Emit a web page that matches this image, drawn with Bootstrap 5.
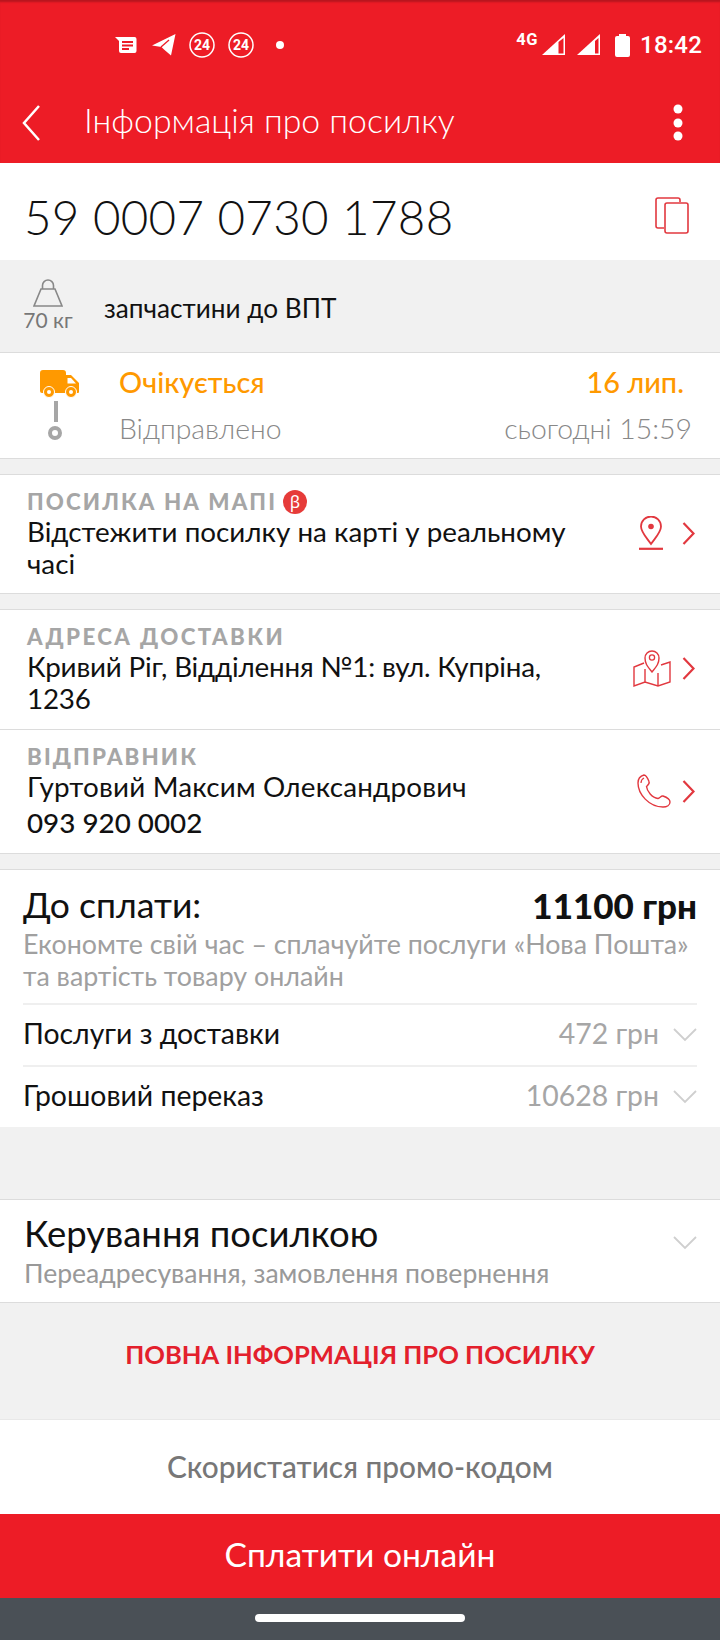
<!DOCTYPE html>
<html lang="uk">
<head>
    <meta charset="UTF-8">
    <meta name="viewport" content="width=device-width, initial-scale=1.0">
    <title>Інформація про посилку</title>
    <link href="https://cdn.jsdelivr.net/npm/bootstrap@5.3.0/dist/css/bootstrap.min.css" rel="stylesheet">
    <style>
        html, body { height: 100%; }
        body { width: 720px; height: 1640px; overflow: hidden; background: #f1f1f1; font-family: Lato, "Noto Sans", sans-serif; color: #111; }
        svg { display: block; flex: none; }

        .top-red { background: #ed1c26; height: 163px; box-shadow: inset 0 3px 2px -1px #b8161e; color: #fff; }
        .status-line { height: 90px; padding-left: 115px; padding-right: 18px; font-family: Roboto, sans-serif; }
        .status-left { gap: 13px; }
        .note-icon { margin-right: 2px; }
        .status-dot { margin-left: 9px; }
        .status-right { margin-left: auto; }
        .net-type { font-size: 16.5px; font-weight: 700; line-height: 16px; letter-spacing: .6px; margin-top: -10px; margin-right: 4px; }
        .sig-two { margin-left: 12px; }
        .batt-icon { margin-left: 15px; }
        .clock { font-size: 24px; font-weight: 500; margin-left: 10px; letter-spacing: .2px; }
        .title-line { height: 73px; padding-left: 22px; padding-right: 37px; padding-bottom: 8px; }
        .title-text { font-size: 33.8px; font-weight: 300; margin-left: 44px; line-height: 1; padding-bottom: 4px; }

        .track-row { height: 97px; background: #fff; padding: 0 31px 0 24px; }
        .track-no { font-size: 47.5px; font-weight: 300; letter-spacing: .3px; line-height: 1; padding-top: 10px; }
        .copy-icon { margin-top: 7px; }

        .weight-row { height: 93px; border-bottom: 1px solid #dcdcdc; padding-left: 23px; }
        .weight-col { width: 50px; padding-bottom: 3px; }
        .weight-text { font-size: 21px; color: #777; line-height: 20px; white-space: nowrap; margin-top: 3px; }
        .goods { font-size: 26.2px; margin-left: 31px; padding-top: 6px; font-weight: 400; }

        .state-row { height: 106px; background: #fff; border-bottom: 1px solid #dcdcdc; padding: 17px 28px 0 40px; }
        .state-icons { width: 79px; }
        .state-wire { width: 4px; height: 21px; background: #a6a6a6; margin: 3px 0 3px 14px; }
        .state-ring { margin-left: 7px; }
        .state-text { line-height: 46px; font-size: 28.4px; margin-top: -11px; }
        .state-on { color: #ff9900; font-weight: 500; font-size: 28.9px; }
        .state-off { color: #888; font-weight: 300; }
        .date-on { padding-right: 8px; }

        .gap-band { height: 15px; }
        .white-block { background: #fff; border-top: 1px solid #dcdcdc; border-bottom: 1px solid #dcdcdc; }
        .info-row { padding: 13px 25px 0 27px; }
        .row-a { height: 118px; }
        .row-b { height: 120px; border-bottom: 1px solid #dcdcdc; }
        .row-c { height: 123px; }
        .info-label { font-size: 22.3px; font-weight: 900; color: #a6a6a6; letter-spacing: 2.1px; line-height: 28px; }
        .label-wide { letter-spacing: 2.4px; }
        .info-value { font-size: 27.8px; font-weight: 400; line-height: 31.5px; }
        .value-tight { letter-spacing: -.2px; }
        .value-loose { letter-spacing: .2px; }
        .info-phone { font-weight: 500; }
        .info-main { width: 560px; }
        .info-marks { margin-left: auto; align-self: flex-start; }
        .marks-a { width: 56px; margin-top: 28px; }
        .marks-b { width: 62px; margin-top: 26px; }
        .marks-c { width: 58px; margin-top: 31px; }
        .beta-mark { width: 24px; height: 24px; border-radius: 50%; background: #e63b39; color: #fff; font-size: 17px; font-weight: 400; letter-spacing: 0; line-height: 24px; text-align: center; margin-left: 6px; font-family: "Noto Sans", sans-serif; }

        .pay-block { height: 258px; background: #fff; padding: 0 23px; border-top: 1px solid #dcdcdc; }
        .pay-head { height: 58px; padding-top: 10px; font-size: 35.5px; line-height: 50px; }
        .pay-sum { font-weight: 900; font-size: 35px; }
        .pay-note { color: #a0a0a0; font-size: 26.8px; font-weight: 400; line-height: 32px; height: 75px; }
        .pay-line { height: 62px; border-top: 2px solid #efefef; font-size: 28.4px; padding-bottom: 3px; }
        .pay-cost { color: #a6a6a6; margin-left: auto; margin-right: 14px; }
        .pay-line svg { margin-top: 3px; }

        .manage-block { height: 104px; background: #fff; padding: 12px 23px 0 24px; margin-top: 72px; border-top: 1px solid #dcdcdc; border-bottom: 1px solid #dcdcdc; }
        .manage-title { font-size: 36.5px; line-height: 43px; }
        .manage-note { font-size: 26.6px; font-weight: 400; color: #999; line-height: 36px; }

        .full-link { height: 116px; color: #e3202c; font-size: 25.6px; font-weight: 700; padding-bottom: 14px; }
        .promo-line { height: 95px; background: #fff; color: #777; font-size: 29.8px; font-weight: 500; border-top: 1px solid #e8e8e8; }
        .pay-btn { height: 84px; width: 100%; background: #ed1c26; color: #fff; font-size: 33.6px; font-weight: 400; border: 0; border-radius: 0; padding: 0 0 4px; display: block; }
        .nav-strip { height: 42px; background: #4a5056; padding-top: 16px; }
        .home-pill { width: 210px; height: 8px; border-radius: 4px; background: #fff; margin: 0 auto; }
    </style>
</head>
<body>
    <!-- Red header -->
    <div class="top-red">
        <div class="status-line d-flex align-items-center">
            <div class="status-left d-flex align-items-center">
                <svg class="note-icon" width="22" height="17" viewBox="0 0 22 17"><path d="M0 0H19.500A2 2 0 0 1 21.500 2V14A2 2 0 0 1 19.500 16H6A2 2 0 0 1 4 14V4Z" fill="#fff"/><path d="M7 5H18M7 8.500H18M7 12H14" stroke="#ed1c26" stroke-width="2"/></svg>
                <svg width="24" height="22" viewBox="0 0 24 22"><path d="M0 11.500 23.500 0 19 21.500 12 15.500 9.500 13 0 11.500Z" fill="#fff"/><path d="M9 13 17 6" stroke="#ed1c26" stroke-width="1.300"/></svg>
                <svg width="26" height="26" viewBox="0 0 26 26"><circle cx="13" cy="13" r="12" fill="none" stroke="#fff" stroke-width="1.500"/><text x="13" y="18" text-anchor="middle" fill="#fff" font-size="14" font-weight="700" font-family="Roboto">24</text></svg>
                <svg width="26" height="26" viewBox="0 0 26 26"><circle cx="13" cy="13" r="12" fill="none" stroke="#fff" stroke-width="1.500"/><text x="13" y="18" text-anchor="middle" fill="#fff" font-size="14" font-weight="700" font-family="Roboto">24</text></svg>
                <svg class="status-dot" width="8" height="8" viewBox="0 0 8 8"><circle cx="4" cy="4" r="4" fill="#fff"/></svg>
            </div>
            <div class="status-right d-flex align-items-center">
                <span class="net-type">4G</span>
                <svg width="23" height="22" viewBox="0 0 23 22"><path d="M0 21 23 0V21Z" fill="#fff"/><path d="M16.500 8V19.500H21.500V4Z" fill="#ed1c26"/></svg>
                <svg class="sig-two" width="23" height="22" viewBox="0 0 23 22"><path d="M0 21 23 0V21Z" fill="#fff"/><path d="M18 7V19.500H21.500V4Z" fill="#ed1c26"/></svg>
                <svg class="batt-icon" width="15" height="23" viewBox="0 0 15 23"><path d="M4 2V0H11V2H13A2 2 0 0 1 15 4V21A2 2 0 0 1 13 23H2A2 2 0 0 1 0 21V4A2 2 0 0 1 2 2Z" fill="#fff"/></svg>
                <span class="clock">18:42</span>
            </div>
        </div>
        <div class="title-line d-flex align-items-center">
            <svg width="18" height="36" viewBox="0 0 18 36"><path d="M17 1 2 18 17 35" fill="none" stroke="#fff" stroke-width="2.500"/></svg>
            <span class="title-text">Інформація про посилку</span>
            <svg class="ms-auto" width="10" height="38" viewBox="0 0 10 38"><circle cx="5" cy="5" r="4.500" fill="#fff"/><circle cx="5" cy="19" r="4.500" fill="#fff"/><circle cx="5" cy="32" r="4.500" fill="#fff"/></svg>
        </div>
    </div>

    <!-- Tracking number -->
    <div class="track-row d-flex align-items-center justify-content-between">
        <span class="track-no">59 0007 0730 1788</span>
        <svg class="copy-icon" width="34" height="37" viewBox="0 0 34 37"><path d="M25 5V3A2 2 0 0 0 23 1H3A2 2 0 0 0 1 3V29A2 2 0 0 0 3 31H9" fill="none" stroke="#e2383f" stroke-width="1.600"/><rect x="10" y="6" width="23" height="30" rx="2" fill="#fff" stroke="#e2383f" stroke-width="1.600"/></svg>
    </div>

    <!-- Weight -->
    <div class="weight-row d-flex align-items-center">
        <div class="weight-col d-flex flex-column align-items-center">
            <svg width="30" height="28" viewBox="0 0 30 28"><path d="M8 10H22L29 27H1Z M9.500 10V6.500A5.500 5.500 0 0 1 20.500 6.500V10" fill="none" stroke="#888" stroke-width="1.600"/></svg>
            <div class="weight-text">70 кг</div>
        </div>
        <div class="goods">запчастини до ВПТ</div>
    </div>

    <!-- Delivery state -->
    <div class="state-row d-flex">
        <div class="state-icons">
            <svg width="40" height="28" viewBox="0 0 40 28"><path d="M3 0H23A3 3 0 0 1 26 3V5H31L39 13V22A1 1 0 0 1 38 23H2A2 2 0 0 1 0 21V3A3 3 0 0 1 3 0Z" fill="#ff9900"/><path d="M27.500 8H31L36 13.500H27.500Z" fill="#fff"/><circle cx="9" cy="22" r="5.500" fill="#ff9900" stroke="#fff" stroke-width="1"/><circle cx="31" cy="22" r="5.500" fill="#ff9900" stroke="#fff" stroke-width="1"/><circle cx="9" cy="22" r="2" fill="#fff"/><circle cx="31" cy="22" r="2" fill="#fff"/></svg>
            <div class="state-wire"></div>
            <svg class="state-ring" width="16" height="16" viewBox="0 0 16 16"><circle cx="8" cy="8" r="5" fill="none" stroke="#a6a6a6" stroke-width="4"/></svg>
        </div>
        <div class="flex-grow-1 state-text">
            <div class="d-flex justify-content-between state-on"><span>Очікується</span><span class="date-on">16 лип.</span></div>
            <div class="d-flex justify-content-between state-off"><span>Відправлено</span><span>сьогодні 15:59</span></div>
        </div>
    </div>

    <div class="gap-band"></div>

    <!-- Map tracking -->
    <div class="white-block">
        <div class="info-row row-a d-flex">
            <div class="info-main">
                <div class="info-label d-flex align-items-center">ПОСИЛКА НА МАПІ<span class="beta-mark">β</span></div>
                <div class="info-value">Відстежити посилку на карті у реальному часі</div>
            </div>
            <div class="info-marks marks-a d-flex align-items-center justify-content-between">
                <svg width="24" height="34" viewBox="0 0 24 34"><path d="M12 28C7 21 2 16 2 10.500A10 10 0 0 1 22 10.500C22 16 17 21 12 28Z" fill="none" stroke="#e2383f" stroke-width="1.800"/><circle cx="12" cy="10.500" r="2.800" fill="#e2383f"/><path d="M0 32.800H24" stroke="#e2383f" stroke-width="2.200"/></svg>
                <svg width="13" height="23" viewBox="0 0 13 23"><path d="M1.500 1 11.500 11.500 1.500 22" fill="none" stroke="#e2383f" stroke-width="2.200"/></svg>
            </div>
        </div>
    </div>

    <div class="gap-band"></div>

    <!-- Address and sender -->
    <div class="white-block">
        <div class="info-row row-b d-flex">
            <div class="info-main">
                <div class="info-label label-wide">АДРЕСА ДОСТАВКИ</div>
                <div class="info-value value-tight">Кривий Ріг, Відділення №1: вул. Купріна, 1236</div>
            </div>
            <div class="info-marks marks-b d-flex align-items-center justify-content-between">
                <svg width="38" height="38" viewBox="0 0 38 38"><path d="M11 14 1 18V37L12 33 25 37 37 33V13L28 16M12 20V33M25 24V37" fill="none" stroke="#e2383f" stroke-width="1.400"/><path d="M19 23C15 18 12 15 12 9A7 7 0 0 1 26 9C26 15 23 18 19 23Z" fill="#fff" stroke="#e2383f" stroke-width="1.400"/><circle cx="19" cy="8.500" r="2.600" fill="none" stroke="#e2383f" stroke-width="1.300"/></svg>
                <svg width="13" height="23" viewBox="0 0 13 23"><path d="M1.500 1 11.500 11.500 1.500 22" fill="none" stroke="#e2383f" stroke-width="2.200"/></svg>
            </div>
        </div>
        <div class="info-row row-c d-flex">
            <div class="info-main">
                <div class="info-label">ВІДПРАВНИК</div>
                <div class="info-value value-loose">Гуртовий Максим Олександрович</div>
                <div class="info-value info-phone mt-1">093 920 0002</div>
            </div>
            <div class="info-marks marks-c d-flex align-items-center justify-content-between">
                <svg width="34" height="34" viewBox="0 0 34 34"><path d="M7 1C3 2 1 5 1 9 1 20 12 33 26 33 30 33 33 31 33 28 33 25 29 23 26 22 24 21.500 23 24 21 24.500 15 24 10 17 9.500 12.500 11 11 13 9.500 12 7.500 11 5 9.500 1 7 1Z" fill="none" stroke="#e2383f" stroke-width="1.400"/><path d="M7 4C5 5 4 7 4 9" fill="none" stroke="#e2383f" stroke-width="1.200"/></svg>
                <svg width="13" height="23" viewBox="0 0 13 23"><path d="M1.500 1 11.500 11.500 1.500 22" fill="none" stroke="#e2383f" stroke-width="2.200"/></svg>
            </div>
        </div>
    </div>

    <div class="gap-band"></div>

    <!-- Payment -->
    <div class="pay-block">
        <div class="pay-head d-flex justify-content-between"><span>До сплати:</span><span class="pay-sum">11100 грн</span></div>
        <div class="pay-note">Економте свій час – сплачуйте послуги «Нова Пошта» та вартість товару онлайн</div>
        <div class="pay-line d-flex align-items-center">
            <span>Послуги з доставки</span><span class="pay-cost">472 грн</span>
            <svg width="24" height="14" viewBox="0 0 24 14"><path d="M1 1 12 12 23 1" fill="none" stroke="#cfcfcf" stroke-width="1.800"/></svg>
        </div>
        <div class="pay-line d-flex align-items-center">
            <span>Грошовий переказ</span><span class="pay-cost">10628 грн</span>
            <svg width="24" height="14" viewBox="0 0 24 14"><path d="M1 1 12 12 23 1" fill="none" stroke="#cfcfcf" stroke-width="1.800"/></svg>
        </div>
    </div>

    <!-- Parcel management -->
    <div class="manage-block d-flex justify-content-between">
        <div>
            <div class="manage-title">Керування посилкою</div>
            <div class="manage-note">Переадресування, замовлення повернення</div>
        </div>
        <svg class="mt-4" width="24" height="14" viewBox="0 0 24 14"><path d="M1 1 12 12 23 1" fill="none" stroke="#cfcfcf" stroke-width="1.800"/></svg>
    </div>

    <div class="full-link d-flex align-items-center justify-content-center">ПОВНА ІНФОРМАЦІЯ ПРО ПОСИЛКУ</div>
    <div class="promo-line d-flex align-items-center justify-content-center">Скористатися промо-кодом</div>
    <button type="button" class="btn pay-btn">Сплатити онлайн</button>
    <div class="nav-strip"><div class="home-pill"></div></div>

    <script src="https://cdn.jsdelivr.net/npm/bootstrap@5.3.0/dist/js/bootstrap.bundle.min.js"></script>
</body>
</html>
